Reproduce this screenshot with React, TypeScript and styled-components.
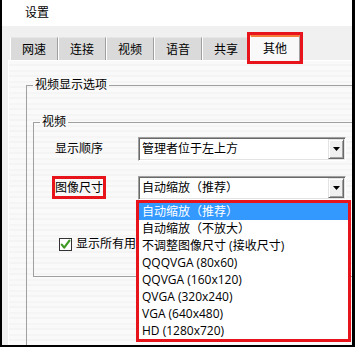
import React from 'react'
import styled, { createGlobalStyle } from 'styled-components'

const GlobalStyle = createGlobalStyle`
  html, body {
    margin: 0;
    padding: 0;
    background: #fff;
  }
  body {
    font-family: "Open Sans", "Noto Sans CJK SC", sans-serif;
    font-size: 12px;
    line-height: 16px;
    color: #000;
  }
`

const Frame = styled.div`
  width: 355px;
  height: 347px;
  box-sizing: border-box;
  border-left: 2px solid #000;
  border-right: 3px solid #000;
  border-bottom: 2px solid #000;
  background: #f0f0f0;
  overflow: hidden;
  display: flex;
  flex-direction: column;
`

const TitleBar = styled.div`
  flex: none;
  height: 26px;
  padding-left: 23px;
  line-height: 26px;
  background: #fff;
`

const TabStrip = styled.div`
  flex: none;
  display: flex;
  align-items: flex-end;
  height: 34px;
  padding-left: 8px;
  box-sizing: border-box;
  position: relative;
  z-index: 2;
`

const Tab = styled.div<{ $active?: boolean }>`
  box-sizing: border-box;
  width: ${p => (p.$active ? 50 : 48)}px;
  height: ${p => (p.$active ? 26 : 23)}px;
  margin-bottom: ${p => (p.$active ? -1 : 0)}px;
  padding-top: 4px;
  text-align: center;
  background: ${p => (p.$active ? '#f9f9f9' : '#dadada')};
  border-top: ${p => (p.$active ? '2px solid #f5803e' : '1px solid #e6e6e6')};
  border-left: 1px solid #fff;
  border-right: 1px solid #a0a0a0;
  outline: ${p => (p.$active ? '3px solid #e8141c' : 'none')};
`

const Panel = styled.div`
  flex: 1;
  width: 400px;
  margin-left: 6px;
  box-sizing: border-box;
  padding: 16px 0 0 17px;
  border-top: 1px solid #fff;
  border-left: 1px solid #fff;
  background: repeating-linear-gradient(
    to bottom,
    #f9f9f9 0px,
    #f9f9f9 3px,
    #f4f4f4 3px,
    #f4f4f4 5px,
    #fafafa 5px,
    #fafafa 9px,
    #f5f5f5 9px,
    #f5f5f5 11px
  );
`

const Group = styled.fieldset<{ $inner?: boolean }>`
  margin: 0 0 0 ${p => (p.$inner ? 6 : 0)}px;
  padding: ${p => (p.$inner ? 0 : 21)}px 0 0 0;
  width: ${p => (p.$inner ? 350 : 380)}px;
  height: ${p => (p.$inner ? 'auto' : '300px')};
  box-sizing: border-box;
  min-width: 0;
  border: 1px solid #a0a0a0;
`

const Legend = styled.legend`
  margin-left: 6px;
  padding: 0 2px;
  line-height: 16px;
`

const GroupBody = styled.div`
  padding: 7px 0 24px 21px;
`

const Row = styled.div<{ $gap?: number }>`
  display: flex;
  align-items: center;
  height: 24px;
  margin-top: ${p => p.$gap ?? 0}px;
`

const RowLabel = styled.div`
  flex: none;
  width: 83px;
`

const Marked = styled.span`
  outline: 3px solid #e8141c;
  outline-offset: 0px;
`

const Combo = styled.div`
  position: relative;
  flex: none;
  display: flex;
  align-items: center;
  width: 208px;
  height: 24px;
  box-sizing: border-box;
  padding-left: 3px;
  background: #fff;
  border: 1px solid;
  border-color: #a0a0a0 #fff #fff #a0a0a0;
  box-shadow: inset 1px 1px #696969, inset -1px -1px #e3e3e3;
`

const ComboText = styled.span`
  flex: 1;
  white-space: nowrap;
`

const DropButton = styled.div`
  flex: none;
  display: flex;
  align-items: center;
  justify-content: center;
  width: 16px;
  height: 20px;
  margin-right: 1px;
  box-sizing: border-box;
  background: #f0f0f0;
  border: 1px solid;
  border-color: #e3e3e3 #696969 #696969 #e3e3e3;
  box-shadow: inset 1px 1px #fff, inset -1px -1px #a0a0a0;
`

const DropList = styled.div`
  position: absolute;
  top: calc(100% + 1px);
  left: -3px;
  z-index: 10;
  width: 215px;
  box-sizing: border-box;
  border: 3px solid #e8141c;
  background: #fff;
`

const Option = styled.div<{ $selected?: boolean }>`
  height: 17px;
  line-height: 17px;
  padding-left: 3px;
  white-space: nowrap;
  background: ${p => (p.$selected ? '#3399ff' : 'transparent')};
  color: ${p => (p.$selected ? '#fff' : '#000')};
`

const CheckRow = styled.div`
  display: flex;
  align-items: center;
  height: 16px;
  margin-top: 36px;
  padding-left: 4px;
  white-space: nowrap;
`

const CheckBox = styled.div`
  flex: none;
  display: flex;
  align-items: center;
  justify-content: center;
  width: 13px;
  height: 13px;
  margin-right: 4px;
  box-sizing: border-box;
  border: 1px solid #333;
  background: #fff;
`

const tabs = ['网速', '连接', '视频', '语音', '共享', '其他']

const sizes = [
  '自动缩放（推荐）',
  '自动缩放（不放大）',
  '不调整图像尺寸 (接收尺寸)',
  'QQQVGA (80x60)',
  'QQVGA (160x120)',
  'QVGA (320x240)',
  'VGA (640x480)',
  'HD (1280x720)',
]

const Arrow = () => (
  <svg width="7" height="4" viewBox="0 0 7 4">
    <polygon points="0,0 7,0 3.5,4" fill="#000" />
  </svg>
)

const Check = () => (
  <svg width="11" height="11" viewBox="0 0 11 11">
    <path d="M1.8 5.6 L4.2 8.6 L9.4 1.6" fill="none" stroke="#3f9a25" strokeWidth="2.2" strokeLinecap="round" strokeLinejoin="round" />
  </svg>
)

export default function App() {
  return (
    <>
      <GlobalStyle />
      <Frame>
        <TitleBar>设置</TitleBar>
        <TabStrip>
          {tabs.map(t => (
            <Tab key={t} $active={t === '其他'}>
              {t}
            </Tab>
          ))}
        </TabStrip>
        <Panel>
          <Group>
            <Legend>视频显示选项</Legend>
            <Group $inner>
              <Legend>视频</Legend>
              <GroupBody>
                <Row>
                  <RowLabel>显示顺序</RowLabel>
                  <Combo>
                    <ComboText>管理者位于左上方</ComboText>
                    <DropButton>
                      <Arrow />
                    </DropButton>
                  </Combo>
                </Row>
                <Row $gap={15}>
                  <RowLabel>
                    <Marked>图像尺寸</Marked>
                  </RowLabel>
                  <Combo>
                    <ComboText>自动缩放（推荐）</ComboText>
                    <DropButton>
                      <Arrow />
                    </DropButton>
                    <DropList>
                      {sizes.map((s, i) => (
                        <Option key={s} $selected={i === 0}>
                          {s}
                        </Option>
                      ))}
                    </DropList>
                  </Combo>
                </Row>
                <CheckRow>
                  <CheckBox>
                    <Check />
                  </CheckBox>
                  显示所有用
                </CheckRow>
              </GroupBody>
            </Group>
          </Group>
        </Panel>
      </Frame>
    </>
  )
}
